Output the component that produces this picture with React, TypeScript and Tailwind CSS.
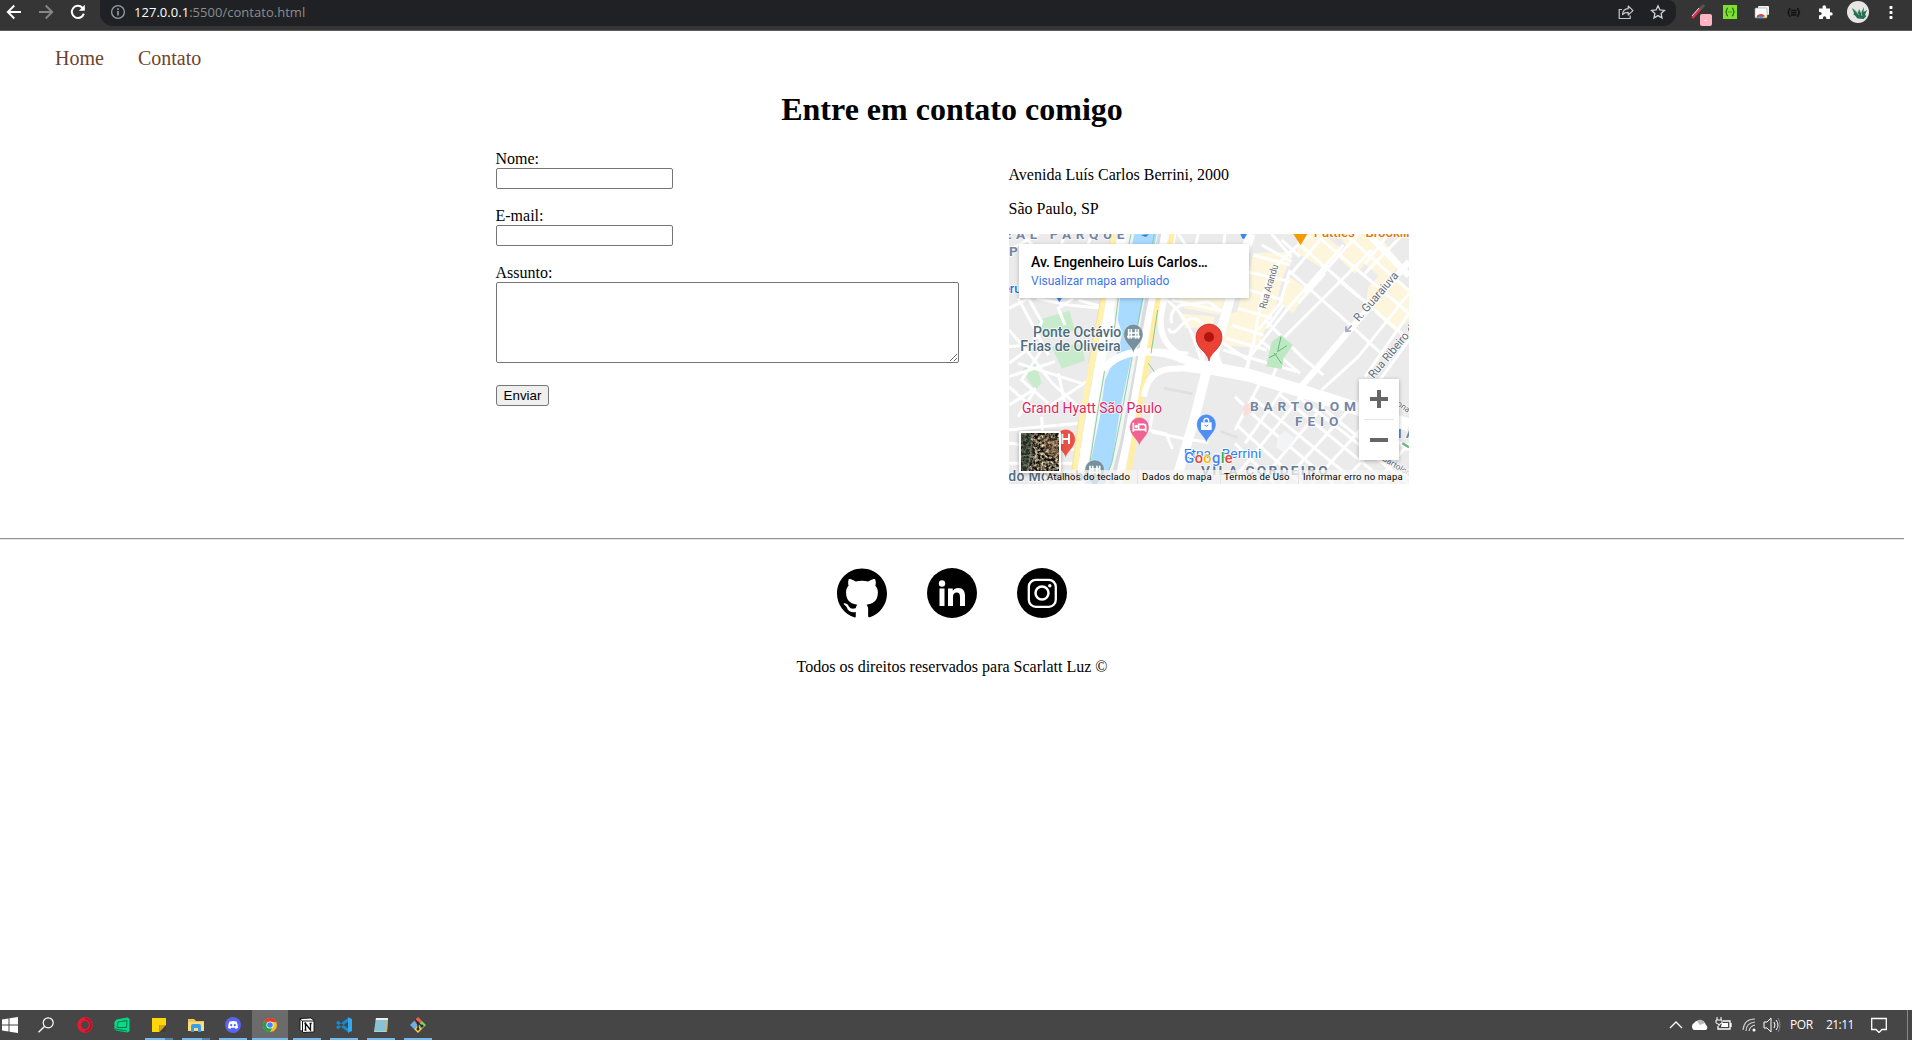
import type { ReactNode } from "react";
import { SiGithub } from "react-icons/si";

function Glyph({ size = 16, box = 16, children }: { size?: number; box?: number; children: ReactNode }) {
  return (
    <svg width={size} height={size} viewBox={`0 0 ${box} ${box}`} fill="none" className="block shrink-0">
      {children}
    </svg>
  );
}

function BrowserBar() {
  return (
    <header className="flex h-[31px] items-start border-b border-[#5c5c5c] bg-[#353535]">
      <div className="flex h-6 w-[100px] shrink-0 items-center pl-[6px] text-white">
        <Glyph><path d="M15 8H2M8.3 1.5 1.8 8l6.5 6.5" stroke="#fff" strokeWidth="1.9" /></Glyph>
        <div className="w-4" />
        <Glyph><path d="M1 8h13M7.7 1.5 14.2 8l-6.5 6.5" stroke="#878787" strokeWidth="1.9" /></Glyph>
        <div className="w-4" />
        <Glyph>
          <path d="M13.8 9.6A6.1 6.1 0 1 1 12.4 3.7L14 5.2" stroke="#fff" strokeWidth="2" />
          <path d="M14.8.8v6H8.8Z" fill="#fff" />
        </Glyph>
      </div>
      <div className="flex h-[26px] w-[1576px] shrink-0 items-center rounded-br-[13px] rounded-bl-[13px] rounded-tr-[8px] bg-[#202124] pb-0.5 pl-[10px]">
        <Glyph>
          <circle cx="8" cy="8" r="6.4" stroke="#9aa0a6" strokeWidth="1.3" />
          <path d="M8 7v4.5M8 4.3v1.6" stroke="#9aa0a6" strokeWidth="1.6" />
        </Glyph>
        <div className="ml-2 whitespace-nowrap font-['Open_Sans',sans-serif] text-[13px] leading-5 tracking-[0.03px] text-[#8b8c8e]">
          <span className="text-white">127.0.0.1</span>:5500/contato.html
        </div>
        <div className="ml-auto flex items-center gap-4 pr-[10px]">
          <Glyph>
            <path d="M4 5.5H1.2v9h11v-3" stroke="#c6c7c9" strokeWidth="1.2" />
            <path d="M4.5 10.5c.3-3.8 2.5-5.6 5.7-5.8V2L15 6.6 10.2 11V8.3c-2.6 0-4.2.6-5.7 2.2Z" stroke="#c6c7c9" strokeWidth="1.2" strokeLinejoin="round" />
          </Glyph>
          <Glyph>
            <path d="m8 1.8 1.9 4.1 4.5.5-3.3 3 .9 4.5-4-2.3-4 2.3.9-4.5-3.3-3 4.5-.5Z" stroke="#d0d1d3" strokeWidth="1.3" />
          </Glyph>
        </div>
      </div>
      <div className="flex h-[26px] flex-1 items-start">
        <svg width="236" height="26" viewBox="0 0 236 26" fill="none">
          <path d="m17 17 8-9" stroke="#d9304c" strokeWidth="3" strokeLinecap="round" />
          <path d="m16 16 7-8" stroke="#f2e7e9" strokeWidth="1" />
          <path d="m24 9 4-4" stroke="#555" strokeWidth="3" />
          <rect x="24" y="14" width="12" height="12" rx="2" fill="#ffb3c1" />
          <path d="M28.500 20.500h2" stroke="#fff" />
          <rect x="47" y="5" width="14" height="14" fill="#7ee02e" />
          <path d="M52 8c-2 0-.5 3.500-2.500 4 2 .5.500 4 2.500 4M56 8c2 0 .5 3.500 2.500 4-2 .500-.5 4-2.500 4M52.500 12h1m1 0h1" stroke="#24541c" strokeWidth="1.100" />
          <rect x="82" y="6" width="11" height="9" rx="1" fill="#f1f1f1" />
          <rect x="79" y="8" width="12" height="10" rx="1" fill="#fff" stroke="#999" strokeWidth=".6" />
          <path d="M80.500 17.600a4.600 4.600 0 0 1 9 0h-2.700a2 2 0 0 0-3.600 0Z" fill="#e34133" />
          <path d="m80.500 17.600.8-2.700 2 2.700Z" fill="#1e9c52" />
          <path d="m89.500 17.600-.8-2.700-2 2.700Z" fill="#f8c31c" />
          <circle cx="85" cy="17" r="1.600" fill="#4285f4" />
          <path d="M114.500 8.500c-2.500 0-.5 3.500-3 4 2.500.500.5 4 3 4M121 8.500c2.500 0 .5 3.500 3 4-2.500.500-.5 4-3 4M115 10.500h5.500m-5.500 2.300h5.500m-5.500 2.200h5.500" stroke="#111" strokeWidth="1.400" />
          <path d="M143 8.500h3.500V7a1.800 1.800 0 0 1 3.600 0v1.500h3.900v3.700h1a1.700 1.700 0 0 1 0 3.400h-1V19h-3.700v-1a1.700 1.700 0 0 0-3.400 0v1H143v-3.700h1a1.700 1.700 0 0 0 0-3.400h-1Z" fill="#fff" />
          <circle cx="182" cy="12" r="11" fill="#e6e6e4" />
          <path d="m176 8 6 5 1-4 2 4 3-6-.5 5 3.500-2-2 5 1.500 1-3 3-6-.5-3-3.500-1 0 .5-2Z" fill="#257052" />
          <path d="m178 9 5 6m2-3 1 4" stroke="#9fc8ac" strokeWidth=".8" />
          <g fill="#fff"><rect x="213.500" y="6" width="3" height="3" rx=".7" /><rect x="213.500" y="11" width="3" height="3" rx=".7" /><rect x="213.500" y="16" width="3" height="3" rx=".7" /></g>
        </svg>
      </div>
    </header>
  );
}

function MapPin({ x, y, color, children }: { x: number; y: number; color: string; children?: ReactNode }) {
  return (
    <g transform={`translate(${x} ${y})`}>
      <path d="M0 57C-3 38-29 26-29 0a29 29 0 0 1 58 0C29 26 3 38 0 57Z" fill={color} stroke="#fff" strokeOpacity=".5" strokeWidth="2" />
      {children}
    </g>
  );
}

/* Street map drawing, three units to one screen pixel. */
function StreetMap() {
  return (
    <svg width="400" height="250" viewBox="12 12 1200 750" className="block">
      <rect x="12" y="12" width="1200" height="750" fill="#ebebec" />
      {/* commercial blocks */}
      <g fill="#fdf6dc">
        <path d="M520 205h140l-15 50-105-20Z" />
        <path d="M745 70l120-5-30 70-25 100-55 120-100-10 10-90 30-10 40-130Z" />
        <path d="M880 12h75l60 50-60 55-80-50Z" />
        <path d="M1000 12h120l70 90-50 50-60-50-30 30-50-50 30-25Z" />
        <path d="M1090 170l50-50 72 60v90l-40 35-90-80Z" />
        <path d="M855 140l55 40-45 70-45-30Z" />
        <path d="M520 250l110 10-10 30-80 5Z" />
      </g>
      <g fill="#c8ebcb">
        <path d="M98 270l96-28 16 60-92 20Z" />
        <path d="M140 350l90-8 10 50-70 24Z" />
        <path d="M50 420l40-30 20 70-20 20Z" />
      </g>
      {/* light lanes left of the river */}
      <g stroke="#fff" strokeWidth="9" fill="none">
        <path d="M12 235 70 205 110 275 80 350 12 400M40 205l90 170M12 300l60 70 70 90 90 80M40 400l190 60M150 395 12 440M12 470l90 80 90-60 60-40M110 360l-60 90 80 70M160 430l20 90M12 525l80-50M90 480 40 560M12 600l210-20M12 640l220 20M110 560l10 202M12 700h210M205 205l-45 30 20 50M220 210l70 20M12 60l90-48M50 12l80 80M180 12l-20 60M260 12l-20 60" />
        <path d="M95 205 190 225 290 235M12 350l100-10" />
      </g>
      {/* river and its banks */}
      <path d="M350 12 300 260 270 500 225 762h140l50-300 60-300 30-150Z" fill="#f3f4f4" />
      <path d="M388 12h67l-50 248-20 90-10 50-30 140-23 150-22 72h-65l23-72 27-130 15-110 40-90 12-50-14-40 7-65Z" fill="#a9daff" />
      <path d="M448 12 397 290 380 390 348 560 320 700 295 762M378 12l-38 193-12 90M300 415l-22 130-23 150" fill="none" stroke="#8ccfa1" strokeWidth="3" />
      <path d="M466 12 418 250 397 400 352 640 320 762" fill="none" stroke="#d9dbde" strokeWidth="14" />
      {/* highways */}
      <path d="M352 12 310 250 280 430 250 600 226 762" fill="none" stroke="#fff" strokeWidth="28" />
      <path d="M310 225q30 60-25 150" fill="none" stroke="#fff" strokeWidth="16" />
      <path d="M326 12 290 235 256 430 229 570 203 762" fill="none" stroke="#fff1ae" strokeWidth="17" />
      <path d="M318 12 282 235 250 400M221 570 195 762" fill="none" stroke="#f7d98b" strokeWidth="2" />
      <path d="M480 12 430 270 397 460 365 640 338 762" fill="none" stroke="#fff" strokeWidth="22" />
      <path d="M503 12 456 230 416 460 386 640 364 762" fill="none" stroke="#ffeea3" strokeWidth="17" />
      <path d="M512 12 465 230" stroke="#fff" strokeWidth="5" />
      {/* local streets */}
      <g stroke="#fff" strokeWidth="9" fill="none" strokeLinejoin="round">
        <path d="M480 205q60 45 90 130l20 60M500 280q-10-40 30-55l80-10 40 30M490 295q10 25 35-5 40-45 70-5v110M460 360l90 10M520 12l40 60 150 30M580 12l-20 80 80 100M660 12l-20 160M500 210l160 35" />
        <path d="M745 75l110 30M725 125l130 30M715 175l120 35M700 235l100 30M680 285l95 30M665 325l120 35M655 360l220 65M640 330l90 60" />
        <path d="M915 15 845 75 795 130 765 230 745 340 720 430M830 30l55 50M855 120l-30 100-65 80M770 45l90 50M800 12l60 70M835 225l-50 70" />
        <path d="M885 45 1212 330M945 25l267 225M855 125l170 150 130 120M785 275l110 110 60 50M765 330l120 100M1020 12l192 170" />
        <path d="M960 12 860 130M1015 45 845 240 735 380M1100 60 825 335M1060 12 900 190M1150 12l-70 90M1195 12 1080 130M1212 190 1060 380 950 480M1212 250 1080 440M1212 330 1110 470M960 130l-80 90M1000 150l60 50" />
        <path d="M690 500l60 60 235 202M740 500l320 262M820 490l330 272M880 500l332 262M960 540l252 205M1060 540l152 120M700 590l190 172M690 640l120 122" />
        <path d="M770 450 690 600M840 470 720 640M895 490 700 730M970 510 760 762M1040 530 830 762M1110 550 920 762M1180 570 1010 762M1212 640 1110 762M725 430l15-80M800 450l30-80" />
        <path d="M445 540l-12 60 50 12 20 45M440 605l90 20 80 12" />
      </g>
      <path d="M480 475l80 16M650 605l45 17" stroke="#dfe0e4" strokeWidth="8" strokeLinecap="round" />
      <path d="M1212 95 1160 155 1030 305 880 480" fill="none" stroke="#fff" strokeWidth="19" />
      <path d="M1090 12l122 125" stroke="#fff" strokeWidth="20" />
      {/* wide avenues */}
      <g fill="none" stroke="#fff">
        <path d="M738 12 700 120 660 260 640 330 610 430" strokeWidth="28" />
        <path d="M605 420 570 560 510 762" strokeWidth="29" />
        <path d="M295 420q40-50 110-54 70-4 125 22 80 25 200 45" strokeWidth="22" />
        <path d="M480 205q-30 90 10 140 40 45 120 62" strokeWidth="18" />
        <path d="M417 500q10-75 75-83l120-6" strokeWidth="18" />
        <path d="M540 405 620 415 730 435 880 480 1212 585" strokeWidth="39" />
        <path d="M620 345l25 70 90 20" strokeWidth="22" />
      </g>
      <path d="M430 400l18 25M458 240l-20 130" stroke="#87c798" strokeWidth="3" />
      <path d="M800 335l28-20 36 30-28 40-6 32-46-8Z" fill="#bee8c2" />
      <path d="m828 320-10 45 28-18m-38 22 22 32m-38-18 24-12" fill="none" stroke="#65b87b" strokeWidth="3" />
      <path d="M715 525l28-8v30l-28 12Z" fill="#f8dedb" />
      <path d="m820 620 20-18 30 24-34 42-22-18Z" fill="#f2f4f6" />

      {/* labels */}
      <g fontFamily="Roboto, sans-serif" fontWeight="500" stroke="#fff" strokeWidth="5" strokeOpacity=".85" paintOrder="stroke" strokeLinejoin="round">
        <g fill="#7486a3" fontSize="41" fontWeight="700">
          <text x="-4" y="28" textLength="362">EAL PARQUE</text>
          <text x="12" y="77">P</text>
          <text x="735" y="543" textLength="318">BARTOLOM</text>
          <text x="870" y="588" textLength="130">FEIO</text>
          <text x="1178" y="624" textLength="52">IA</text>
          <text x="588" y="734" textLength="380" fill="#66768d">VILA CORDEIRO</text>
        </g>
        <g fill="#4f6d7d" fontSize="42">
          <text x="84" y="321" textLength="265" lengthAdjust="spacingAndGlyphs">Ponte Octávio</text>
          <text x="46" y="363" textLength="301" lengthAdjust="spacingAndGlyphs">Frias de Oliveira</text>
          <text x="10" y="752" textLength="236">do Morumbi</text>
        </g>
        <text x="51" y="549" textLength="420" fill="#e2245f" fontSize="42" fontWeight="400" lengthAdjust="spacingAndGlyphs">Grand Hyatt São Paulo</text>
        <text x="536" y="683" textLength="233" fill="#2f7fed" fontSize="40" fontWeight="400" lengthAdjust="spacingAndGlyphs">Etna - Berrini</text>
        <text x="-6" y="189" fill="#1a73e8" fontSize="38">eru</text>
        <text x="926" y="21" fill="#e37400" fontSize="40" textLength="300">Patties - Brooklin</text>
        <g fill="#5f6b78" fontSize="30" fontWeight="400">
          <text transform="translate(782 238) rotate(-74)" textLength="137" lengthAdjust="spacingAndGlyphs">Rua Arandu</text>
          <text transform="translate(1061 277) rotate(-49)" fontSize="35" textLength="184" lengthAdjust="spacingAndGlyphs">R. Guaraiuva</text>
          <text transform="translate(1106 447) rotate(-50)" fontSize="35" textLength="214" lengthAdjust="spacingAndGlyphs">Rua Ribeiro do</text>
          <text transform="translate(1130 690) rotate(31)" fontSize="25">Bartolomeu</text>
          <text transform="translate(1174 525) rotate(35)" fontSize="25">ona</text>
        </g>
      </g>
      <path d="m1040 286-16 17m-1-14 0 15 15-1" fill="none" stroke="#a0a8c4" strokeWidth="5" />
      <path d="M865 12h42l-20 34Z" fill="#f59b00" />
      <path d="M706 12h20l-8 14h-6ZM155 203h16l-8 14Z" fill="#3c85f4" />
      <path d="m408 15 24-2-10 8" fill="#397cbc" />
      <path d="m1192 640 20 12" stroke="#65b87b" strokeWidth="7" />

      {/* places */}
      <MapPin x={385} y={312} color="#78909c"><path d="M-14-15v29M-6-15v29M7-15v29M15-15v29M-19 8h39M-14-3h29" stroke="#fff" strokeWidth="5" /></MapPin>
      <MapPin x={269} y={719} color="#78909c"><path d="M-14-12v27M-6-12v27M7-12v27M15-12v27M-18 8h37M-14-2h29" stroke="#fff" strokeWidth="5" /></MapPin>
      <MapPin x={182} y={627} color="#ea5145"><path d="M-10-16v31m20-31v31M-10 0h20" stroke="#fff" strokeWidth="6" /></MapPin>
      <MapPin x={403} y={591} color="#f06292"><path d="M-18-13v27m0-6h37m0 6V-2q0-6-6-6H-2V6" fill="none" stroke="#fff" strokeWidth="5" /><circle cx="-9" cy="-2" r="5" fill="#fff" /></MapPin>
      <MapPin x={604} y={582} color="#4f8ff4"><path d="M-16-5h32v23h-32Z" fill="#fff" /><path d="M-7-5v-5a7 7 0 0 1 14 0v5" fill="none" stroke="#fff" strokeWidth="4" /><path d="M-6 3q6 7 12 0" fill="none" stroke="#4f8ff4" strokeWidth="3" /></MapPin>
      <path d="M612 393c-4-28-39-36-39-72a39 39 0 0 1 78 0c0 36-35 44-39 72Z" fill="#ea4335" stroke="#c5221f" strokeWidth="2" />
      <circle cx="612" cy="321" r="15" fill="#b31412" />

      <text x="538" y="699" fontFamily="Roboto, sans-serif" fontSize="44" fontWeight="500" textLength="145" stroke="#fff" strokeWidth="4" paintOrder="stroke">
        <tspan fill="#4285f4">G</tspan><tspan fill="#ea4335">o</tspan><tspan fill="#fbbc05">o</tspan><tspan fill="#4285f4">g</tspan><tspan fill="#34a853">l</tspan><tspan fill="#ea4335">e</tspan>
      </text>
    </svg>
  );
}

function SatelliteThumb() {
  return (
    <svg width="38" height="38" viewBox="0 0 38 38" className="block">
      <filter id="terrain" x="0" y="0" width="100%" height="100%" colorInterpolationFilters="sRGB">
        <feTurbulence type="fractalNoise" baseFrequency=".35" numOctaves="3" seed="8" />
        <feColorMatrix values="2.4 0 0 0 -.82  2.2 0 0 0 -.76  1.9 0 0 0 -.68  0 0 0 0 1" />
      </filter>
      <rect width="38" height="38" fill="#65614e" />
      <rect width="38" height="38" filter="url(#terrain)" opacity=".85" />
      <path d="M0 0h9l4 20-6 18H0Z" fill="#26382f" opacity=".6" />
      <path d="m0 23 38-5M12 0 7 38M6 22l32 13" stroke="#a3a18f" strokeWidth="1" opacity=".5" />
      <path d="M22 3l16 5v18l-14-6Z" fill="#9b6648" opacity=".35" />
    </svg>
  );
}

function MapEmbed() {
  return (
    <div className="relative h-[250px] w-[400px] overflow-hidden font-['Roboto',sans-serif]">
      <StreetMap />
      <div className="absolute top-[10px] left-[10px] h-[54px] w-[230px] bg-white px-3 pt-[9px] shadow-[0_1px_4px_rgba(0,0,0,0.25)]">
        <div className="whitespace-nowrap text-[14px] leading-[18px] font-medium tracking-[0.02px] text-black">Av. Engenheiro Luís Carlos…</div>
        <div className="mt-px whitespace-nowrap text-[12px] leading-[18px] text-[#3b78e7]">Visualizar mapa ampliado</div>
      </div>
      <div className="absolute top-[145px] left-[350px] flex h-[81px] w-10 flex-col items-center justify-between bg-white py-[11px] shadow-[0_1px_4px_rgba(0,0,0,0.3)]">
        <svg width="18" height="18" viewBox="0 0 18 18"><path d="M0 9h18M9 0v18" stroke="#666" strokeWidth="4" /></svg>
        <div className="h-px w-[30px] bg-[#e6e6e6]" />
        <svg width="18" height="18" viewBox="0 0 18 18"><path d="M0 9h18" stroke="#666" strokeWidth="4" /></svg>
      </div>
      <div className="absolute right-0 bottom-0 flex h-[14px] w-[365px] bg-[#f5f5f5]/75 text-[9.5px] leading-[14px] whitespace-nowrap text-black">
        <div className="w-[94px] border-r border-[#e4e4e4] pl-[3px] tracking-[0.22px]">Atalhos do teclado</div>
        <div className="w-[83px] border-r border-[#e4e4e4] pl-[4px] tracking-[0.25px]">Dados do mapa</div>
        <div className="w-[78px] border-r border-[#e4e4e4] pl-[3px] tracking-[0.15px]">Termos de Uso</div>
        <div className="pl-[4px] tracking-[0.23px]">Informar erro no mapa</div>
      </div>
      <div className="absolute top-[197px] left-[10px] rounded-[2px] border-2 border-white shadow-[0_1px_4px_rgba(0,0,0,0.3)]">
        <SatelliteThumb />
      </div>
    </div>
  );
}

function ContactForm() {
  return (
    <form className="w-[513px]">
      <label htmlFor="nome" className="-ml-px block h-[18px] pl-[0.5px] leading-[18px]">Nome:</label>
      <input id="nome" className="mb-[18px] block h-[21px] w-[177px] rounded-[2px] border border-[#767676] bg-white" />
      <label htmlFor="email" className="-ml-px block h-[18px] pl-[0.5px] leading-[18px]">E-mail:</label>
      <input id="email" className="mb-[18px] block h-[21px] w-[177px] rounded-[2px] border border-[#767676] bg-white" />
      <label htmlFor="assunto" className="-ml-px block h-[18px] pl-[0.5px] leading-[18px]">Assunto:</label>
      <textarea id="assunto" className="mb-[22px] block h-[81px] w-[463px] resize rounded-[2px] border border-[#767676] bg-white" />
      <button type="button" className="block h-[21px] w-[53px] rounded-[3px] border border-[#767676] bg-[#efefef] font-['Liberation_Sans',sans-serif] text-[13.333px] leading-[18px]">Enviar</button>
    </form>
  );
}

function SocialLinks() {
  return (
    <div className="flex h-[50px] justify-center gap-10">
      <SiGithub className="h-[50px] w-[50px] text-black" />
      <svg width="50" height="50" viewBox="0 0 50 50">
        <circle cx="25" cy="25" r="25" />
        <circle cx="15" cy="15.500" r="3.200" fill="#fff" />
        <path d="M12.500 20.500h5V38h-5ZM21 20.500h4.800V23c1-1.700 2.700-2.900 5.400-2.900 5 0 6.800 3.300 6.800 8V38h-5v-9c0-2.600-.7-4.400-3.200-4.400-2.600 0-3.800 1.800-3.800 4.400v9h-5Z" fill="#fff" />
      </svg>
      <svg width="50" height="50" viewBox="0 0 50 50">
        <circle cx="25" cy="25" r="25" />
        <rect x="11.800" y="11.800" width="27" height="27" rx="7" fill="none" stroke="#fff" strokeWidth="2.300" />
        <circle cx="25" cy="25" r="6.500" fill="none" stroke="#fff" strokeWidth="2.500" />
        <circle cx="32.800" cy="17.700" r="1.700" fill="#fff" />
      </svg>
    </div>
  );
}

const apps: { name: string; state: "idle" | "open" | "many" | "active"; icon: ReactNode }[] = [
  { name: "Opera", state: "idle", icon: <><ellipse cx="8" cy="8" rx="5.700" ry="6" stroke="#e91932" strokeWidth="4" /><path d="M8 1.500c8 1 8 12 0 13" stroke="#ac1525" strokeWidth="1.600" /></> },
  { name: "Studio", state: "idle", icon: <><path d="M2.500 2.500 13.500.5l2 1.500v12l-2 1.500L2 13.500.5 12V5Z" fill="#08d985" /><path d="m4 5 9-1.500-.5 7L3 10.500ZM1 12l12 2" stroke="#075c43" strokeWidth=".8" /></> },
  { name: "Notes", state: "many", icon: <><path d="M1 1h14v14H1Z" fill="#ffd60a" /><path d="M8.500 8H15v7H8.500Z" fill="#3b3f42" /><path d="M8.500 15V8H15Z" fill="#d7a71b" /></> },
  { name: "Files", state: "many", icon: <><path d="M0 2h6l2 2h8v10H0Z" fill="#f5c451" /><path d="M0 5h16v9H0Z" fill="#ffdc7b" /><path d="M3 15V9q0-2 2-2h6q2 0 2 2v6h-3v-4H6v4Z" fill="#3b9ee8" /></> },
  { name: "Chat", state: "open", icon: <><circle cx="8" cy="8" r="8" fill="#5865f2" /><path d="M4.500 4.600q3.500-1.300 7 0Q13 7 13 11l-2.400 1-.6-1.200H6L5.400 12 3 11q0-4 1.500-6.400Z" fill="#fff" /><circle cx="6.200" cy="8.200" r="1.100" fill="#5865f2" /><circle cx="9.800" cy="8.200" r="1.100" fill="#5865f2" /></> },
  { name: "Chrome", state: "active", icon: <><circle cx="8" cy="8" r="7" fill="#fbc116" /><path d="M8 8 2 4.300A7 7 0 0 1 14.300 5H8Z" fill="#e33b2e" /><path d="M2 4.300A7 7 0 0 0 8 15l2.800-5.300L8 8Z" fill="#229f52" /><circle cx="8" cy="8" r="3.600" fill="#fff" /><circle cx="8" cy="8" r="2.800" fill="#4285f4" /></> },
  { name: "Notion", state: "open", icon: <><path d="M1 1.500 11.500 1 15 3v12L4 15.500 1 12.500Z" fill="#fff" stroke="#181818" /><path d="M3.500 4H15M3.500 4v11M3.500 4 1 2" stroke="#111" /><path d="M6.500 13V6.500l5 6.500V6.500M5.300 6.500h2m3.200 0h2.200M5.500 13h2" stroke="#111" strokeWidth="1.300" /></> },
  { name: "Code", state: "open", icon: <><path d="m.5 5 1.500-1.200L13 12v3.800L.5 6.500ZM.5 11l1.500 1.200L13 4V.2L.5 9.500Z" fill="#168bd2" /><path d="m12 .2 4 1.800v12l-4 1.800Z" fill="#32a9ed" /></> },
  { name: "Notepad", state: "open", icon: <><path d="M3 1h12l-1 14H1Z" fill="#a5d6e4" /><path d="M2.500 3h11M2.400 5h11M2.200 7h11M2 9h11M2 11h11M2 13h11" stroke="#5da6bb" strokeWidth=".8" /><path d="M3 1h12l-.2 2H2.800Z" fill="#eee" /><path d="m14 3-.5 12" stroke="#d1ad70" /></> },
  { name: "Git", state: "open", icon: <><path d="m8 0 4 4-4 4-4-4Z" fill="#f0644d" /><path d="m12 4 4 4-4 4-4-4Z" fill="#8bcd65" /><path d="m4 4 4 4-4 4-4-4Z" fill="#6ab0ee" /><path d="m8 8 4 4-4 4-4-4Z" fill="#f5cf55" /><path d="M5 2.500 8 6v7M8 6l4 3" stroke="#292929" strokeWidth="1.400" /><circle cx="8" cy="6" r="1.500" fill="#292929" /><circle cx="8" cy="12" r="1.500" fill="#292929" /><circle cx="12" cy="9" r="1.500" fill="#292929" /></> },
];

function Taskbar() {
  return (
    <footer className="flex h-[30px] items-stretch bg-[#464646] text-white">
      <div className="flex w-[38px] items-center pl-[2px]">
        <Glyph><path d="m0 2.500 6.500-1v6H0ZM7.500 1.300 16 0v7.500H7.500ZM0 8.500h6.500v6L0 13.600ZM7.500 8.500H16V16l-8.500-1.300Z" fill="#fff" /></Glyph>
      </div>
      <div className="flex w-[29px] items-center">
        <Glyph><circle cx="10.200" cy="5.800" r="5" stroke="#fff" strokeWidth="1.200" /><path d="m6.500 9.500-6 5.800" stroke="#fff" strokeWidth="1.300" /></Glyph>
      </div>
      {apps.map((app) => (
        <div key={app.name} title={app.name} className={app.state === "active" ? "flex w-9 flex-col items-center bg-[#6b6b6b] mr-px" : "mr-px flex w-9 flex-col items-center"}>
          <div className="flex h-7 items-center pt-[2px]"><Glyph>{app.icon}</Glyph></div>
          {app.state === "active" && <div className="h-[2px] w-full bg-[#76b9ed]" />}
          {app.state === "open" && <div className="h-[2px] w-7 bg-[#76b9ed]" />}
          {app.state === "many" && <div className="flex h-[2px] w-7"><div className="w-5 bg-[#76b9ed]" /><div className="w-2 bg-[#5587ae]" /></div>}
        </div>
      ))}
      <div className="ml-auto flex items-center">
        <svg width="120" height="20" viewBox="1665 1015 120 20" fill="none">
          <path d="m1670 1028 6-6 6 6" stroke="#fff" strokeWidth="1.300" />
          <path d="M1694 1030a4 4 0 0 1 0-7 6 6 0 0 1 9-1 4 4 0 0 1 3 3 3 3 0 0 1 0 5Z" fill="#fff" />
          <path d="M1697 1021a5 5 0 0 1 8 2l-5 2Z" fill="#bbb" />
          <path d="M1723 1021h7v8h-12v-3m13-3v4" stroke="#fff" strokeWidth="1.300" /><path d="M1722 1023h6v4h-7Z" fill="#fff" /><path d="M1716 1020h6v3q-3 3-6 0Zm1-3v3m4-3v3m-2 4v2" stroke="#fff" />
          <path d="M1743 1030q1-11 12-11m-9 12q0-8 9-9m-6 9q1-5 6-6" stroke="#ccc" strokeWidth="1.200" /><circle cx="1754" cy="1030" r="1.500" fill="#fff" />
          <path d="M1764 1022h3l4-4v14l-4-4h-3Zm10 0q2 3 0 6m2-8q4 5 0 10" stroke="#fff" /><path d="M1778 1018q4 7 0 14" stroke="#888" />
        </svg>
        <span className="ml-[5px] w-9 font-['Open_Sans',sans-serif] text-[12px] tracking-[-0.4px]">POR</span>
        <span className="w-[45px] font-['Open_Sans',sans-serif] text-[12px] tracking-[-0.55px]">21:11</span>
        <Glyph><path d="M.7 1.500h14.600v11H11l-3 3-3-3H.7Z" stroke="#fff" strokeWidth="1.300" /></Glyph>
        <div className="ml-5 h-[30px] w-[5px] border-l border-[#888]" />
      </div>
    </footer>
  );
}

export default function App() {
  return (
    <div className="flex h-[1040px] w-[1912px] flex-col overflow-hidden bg-white font-['Liberation_Serif',serif] text-[16px] text-black">
      <BrowserBar />
      <div className="w-[1904px] flex-1">
        <nav className="flex h-[60px] gap-[34px] pt-[15px] pl-[55px] text-[20px] leading-6 text-[#70432c]">
          <a>Home</a>
          <a>Contato</a>
        </nav>
        <h1 className="h-[59px] text-center text-[32px] leading-[37px] font-bold">Entre em contato comigo</h1>
        <main className="flex h-[388px] pl-[496px]">
          <ContactForm />
          <section className="pt-4">
            <p className="-ml-px mb-4 h-[18px] pl-[0.5px] leading-[18px]">Avenida Luís Carlos Berrini, 2000</p>
            <p className="-ml-px mb-4 h-[18px] pl-[0.5px] leading-[18px]">São Paulo, SP</p>
            <MapEmbed />
          </section>
        </main>
        <div className="mb-7 h-[2px] border-t border-b border-t-[#949494] border-b-[#e8e8e8]" />
        <SocialLinks />
        <p className="mt-10 text-center leading-[18px]">Todos os direitos reservados para Scarlatt Luz ©</p>
      </div>
      <Taskbar />
    </div>
  );
}
